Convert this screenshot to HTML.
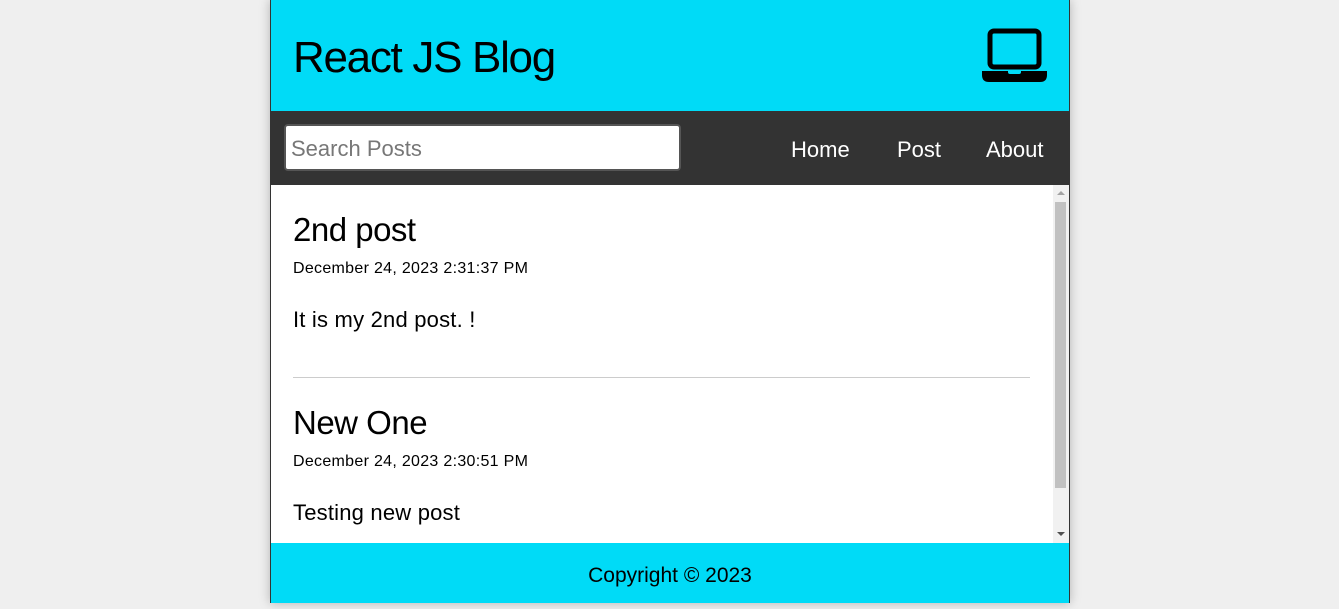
<html><head><style>
body{margin:0;background:#efefef;font-family:"Liberation Sans",sans-serif;width:1339px;height:603px;overflow:hidden}
.app{position:absolute;left:270px;top:0;width:798px;height:603px;border-left:1px solid #333;border-right:1px solid #333;background:#fff;box-shadow:0 0 10px rgba(0,0,0,.25)}
header{height:111px;background:#00dbf7;position:relative}
header h1{margin:0;position:absolute;left:22px;top:33px;font-size:44px;font-weight:normal;letter-spacing:-1.3px}
nav{height:74px;background:#333;position:relative}
nav .s{position:absolute;left:13px;top:13px;width:397px;height:47px;background:#fff;border:2px solid #555;border-radius:4px;box-sizing:border-box;font-size:22px;color:#777;padding:10px 5px}
nav a{position:absolute;top:26px;color:#fff;font-size:22px}
main{position:absolute;top:185px;left:0;width:798px;height:358px;overflow:hidden}
.p{position:absolute;left:22px}
.p h2{margin:0;font-size:33px;font-weight:normal;letter-spacing:-.5px}
.p .d{font-size:16px;margin-top:11px;letter-spacing:.3px}
.p .b{font-size:22px;margin-top:29px;letter-spacing:.2px}
.hr{position:absolute;left:22px;top:192px;width:737px;border-top:1px solid #ccc}
.sb{position:absolute;right:0;top:0;width:16px;height:358px;background:#f1f1f1}
.th{position:absolute;left:2px;top:17px;width:11px;height:286px;background:#c1c1c1}
.ar{position:absolute;left:4px;width:0;height:0;border-left:4px solid transparent;border-right:4px solid transparent}
footer{position:absolute;top:543px;width:798px;height:60px;background:#00dbf7;text-align:center;font-size:21px;line-height:66px}
</style></head><body><div class="app">
<header><h1>React JS Blog</h1>
<svg style="position:absolute;left:710px;top:28px" width="67" height="56" viewBox="0 0 67 56"><rect x="9" y="3" width="49" height="36" rx="4" fill="none" stroke="#000" stroke-width="5"/><path d="M1 43h65v4q0 7-7 7H8q-7 0-7-7z" fill="#000"/><path d="M27 43h13v1q0 2-2 2h-9q-2 0-2-2z" fill="#00dbf7"/></svg>
</header>
<nav><div class="s">Search Posts</div><a style="left:520px">Home</a><a style="left:626px">Post</a><a style="left:715px">About</a></nav>
<main>
<div class="p" style="top:26px"><h2>2nd post</h2><div class="d">December 24, 2023 2:31:37 PM</div><div class="b">It is my 2nd post. !</div></div>
<div class="hr"></div>
<div class="p" style="top:219px"><h2>New One</h2><div class="d">December 24, 2023 2:30:51 PM</div><div class="b">Testing new post</div></div>
<div class="sb"><div class="ar" style="top:6px;border-bottom:4px solid #a3a3a3"></div><div class="th"></div><div class="ar" style="top:347px;border-top:4px solid #505050"></div></div>
</main>
<footer>Copyright © 2023</footer>
</div></body></html>
